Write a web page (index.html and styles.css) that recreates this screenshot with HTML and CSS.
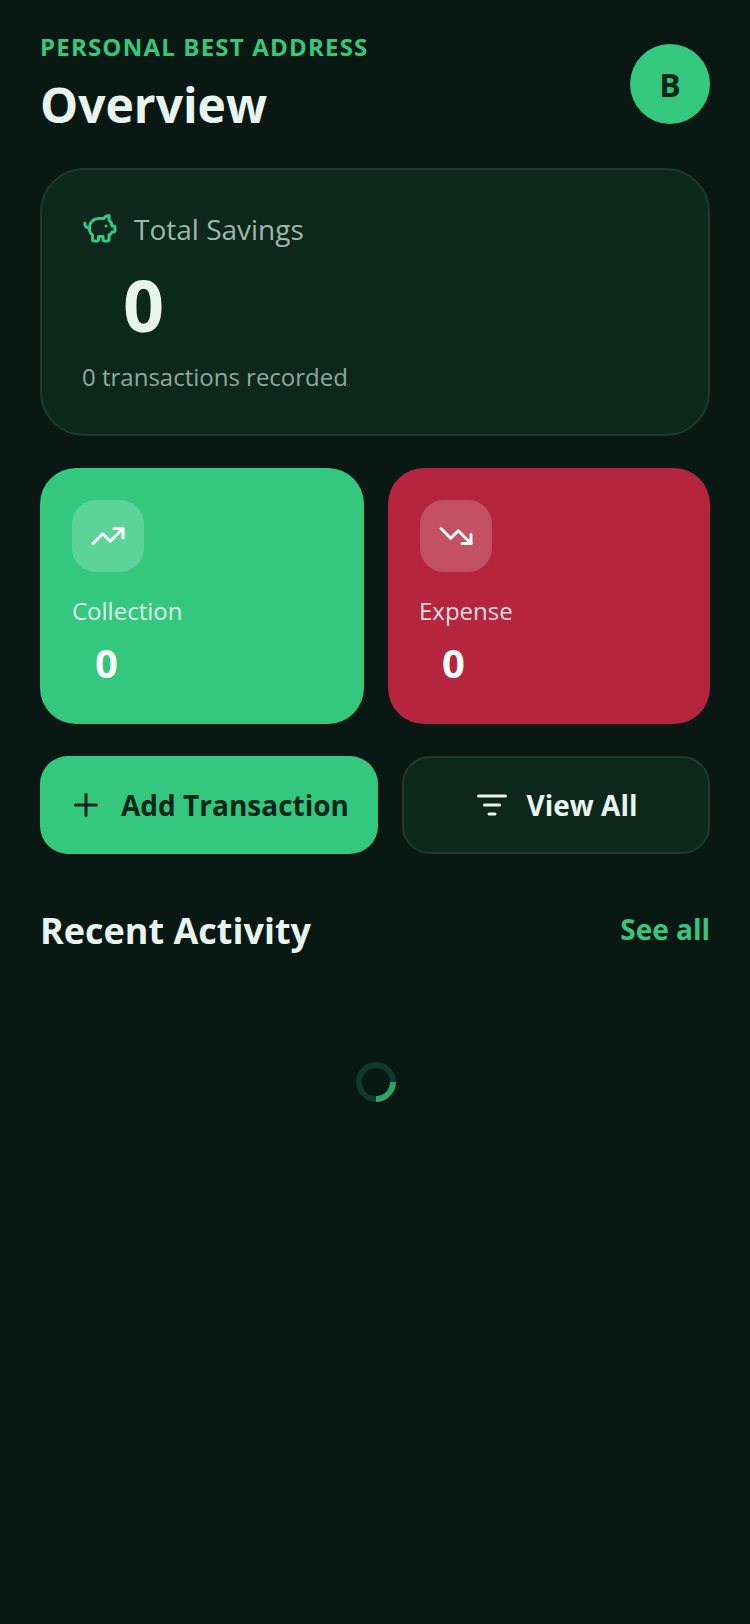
FILE: index.html
```html
<!DOCTYPE html>
<html>
<head>
    <title>Overview</title>
    <link rel="stylesheet" href="styles.css">
</head>
<body>
    <div class="screen">
        <div class="header">
            <div>
                <p class="eyebrow">PERSONAL BEST ADDRESS</p>
                <h1>Overview</h1>
            </div>
            <div class="avatar">B</div>
        </div>

        <div class="savings-card">
            <div class="savings-title">
                <svg class="icon-pig" viewBox="0 0 24 24">
                    <path d="M11 17h3v2a1 1 0 0 0 1 1h2a1 1 0 0 0 1-1v-3a3.16 3.16 0 0 0 2-2h1a1 1 0 0 0 1-1v-2a1 1 0 0 0-1-1h-1a5 5 0 0 0-2-4V3a4 4 0 0 0-3.2 1.6l-.3.4H11a6 6 0 0 0-6 6v1a5 5 0 0 0 2 4v3a1 1 0 0 0 1 1h2a1 1 0 0 0 1-1z"/>
                    <path d="M16 10h.01"/>
                    <path d="M2 8v1a2 2 0 0 0 2 2h1"/>
                </svg>
                <span>Total Savings</span>
            </div>
            <div class="savings-amount">0</div>
            <p class="savings-note">0 transactions recorded</p>
        </div>

        <div class="stats">
            <div class="stat stat-in">
                <div class="stat-icon">
                    <svg class="icon" viewBox="0 0 24 24">
                        <path d="M22 7l-8.5 8.5-5-5L2 17"/>
                        <path d="M16 7h6v6"/>
                    </svg>
                </div>
                <p class="stat-label">Collection</p>
                <div class="stat-value">0</div>
            </div>
            <div class="stat stat-out">
                <div class="stat-icon">
                    <svg class="icon" viewBox="0 0 24 24">
                        <path d="M22 17l-8.5-8.5-5 5L2 7"/>
                        <path d="M16 17h6v-6"/>
                    </svg>
                </div>
                <p class="stat-label">Expense</p>
                <div class="stat-value">0</div>
            </div>
        </div>

        <div class="actions">
            <button class="btn btn-add">
                <svg class="icon" viewBox="0 0 24 24">
                    <path d="M5 12h14"/>
                    <path d="M12 5v14"/>
                </svg>
                Add Transaction
            </button>
            <button class="btn btn-view">
                <svg class="icon" viewBox="0 0 24 24">
                    <path d="M3 6h18"/>
                    <path d="M7 12h10"/>
                    <path d="M10 18h4"/>
                </svg>
                View All
            </button>
        </div>

        <div class="section-head">
            <h2>Recent Activity</h2>
            <span class="see-all">See all</span>
        </div>

        <div class="loading">
            <div class="spinner"></div>
        </div>
    </div>
</body>
</html>
```

FILE: styles.css
```css
* {
    box-sizing: border-box;
}
body {
    font-family: "Open Sans", "Noto Sans", sans-serif;
    background-color: #091813;
    color: #e8f5ee;
    margin: 0;
    padding: 0;
}
p, h1, h2 {
    margin: 0;
}
svg {
    fill: none;
    stroke: currentColor;
    stroke-linecap: round;
    stroke-linejoin: round;
}
.screen {
    width: 750px;
    min-height: 1624px;
    padding: 29px 40px 0;
}
.header {
    display: flex;
    justify-content: space-between;
    align-items: flex-start;
}
.eyebrow {
    font-size: 24px;
    line-height: 36px;
    font-weight: 700;
    letter-spacing: 1.2px;
    color: #34c87e;
}
h1 {
    font-size: 48px;
    line-height: 66px;
    font-weight: 700;
    margin-top: 7px;
}
.avatar {
    width: 80px;
    height: 80px;
    margin-top: 15px;
    border-radius: 50%;
    background-color: #34c87e;
    color: #08251a;
    font-size: 32px;
    font-weight: 700;
    display: flex;
    align-items: center;
    justify-content: center;
}
.savings-card {
    height: 268px;
    margin-top: 30px;
    padding: 40px;
    background-color: #0e271d;
    border: 2px solid #1d3b2f;
    border-radius: 44px;
}
.savings-title {
    display: flex;
    align-items: center;
    gap: 16px;
    font-size: 28px;
    line-height: 38px;
    color: #9db8aa;
}
.icon-pig {
    width: 36px;
    height: 36px;
    color: #34c87e;
    stroke-width: 2;
}
.savings-amount {
    font-size: 72px;
    line-height: 98px;
    font-weight: 700;
    padding: 7px 0 0 41px;
}
.savings-note {
    font-size: 24px;
    line-height: 34px;
    margin-top: 7px;
    color: #8fa99c;
}
.stats {
    display: flex;
    gap: 24px;
    margin-top: 32px;
}
.stat {
    height: 256px;
    padding: 32px;
    border-radius: 36px;
    color: #fff;
}
.stat-in {
    width: 324px;
    background-color: #34c87e;
}
.stat-out {
    width: 322px;
    background-color: #b5253d;
}
.stat-out .stat-label,
.stat-out .stat-value {
    margin-left: -1px;
}
.stat-icon {
    width: 72px;
    height: 72px;
    border-radius: 24px;
    background-color: rgba(255, 255, 255, 0.2);
    display: flex;
    align-items: center;
    justify-content: center;
}
.icon {
    width: 36px;
    height: 36px;
    stroke-width: 2;
    flex-shrink: 0;
}
.stat-label {
    font-size: 24px;
    line-height: 34px;
    margin-top: 22px;
    color: rgba(255, 255, 255, 0.85);
}
.stat-value {
    font-size: 40px;
    line-height: 54px;
    font-weight: 700;
    margin-top: 8px;
    padding-left: 23px;
}
.actions {
    display: flex;
    gap: 24px;
    margin-top: 32px;
}
.btn {
    height: 98px;
    border-radius: 28px;
    font-family: inherit;
    font-size: 28px;
    font-weight: 700;
    display: flex;
    align-items: center;
    justify-content: center;
    gap: 17px;
    padding: 0 1px 0 0;
}
.btn-add {
    width: 338px;
    border: none;
    background-color: #34c87e;
    color: #08251a;
}
.btn-view {
    width: 308px;
    border: 2px solid #1d3b2f;
    background-color: #0e271d;
    color: #e8f5ee;
}
.section-head {
    display: flex;
    justify-content: space-between;
    align-items: center;
    margin-top: 52px;
}
h2 {
    font-size: 36px;
    line-height: 50px;
    font-weight: 700;
}
.see-all {
    font-size: 28px;
    font-weight: 700;
    margin-bottom: 4px;
    color: #34c87e;
}
.loading {
    display: flex;
    justify-content: center;
    margin-top: 106px;
    padding-left: 2px;
}
.spinner {
    width: 40px;
    height: 40px;
    border: 6px solid #0f3a2b;
    border-right-color: #2ca56c;
    border-radius: 50%;
    transform: rotate(45deg);
}
```
